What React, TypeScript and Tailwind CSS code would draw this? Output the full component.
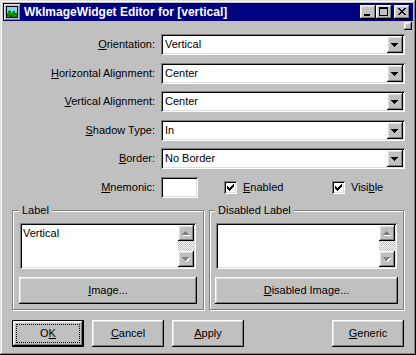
import React from "react";

const raised =
  "shadow-[inset_-1px_-1px_#000000,inset_1px_1px_#ffffff,inset_-2px_-2px_#808080,inset_2px_2px_#dfdfdf]";
const sunken =
  "shadow-[inset_1px_1px_#808080,inset_-1px_-1px_#ffffff,inset_2px_2px_#000000,inset_-2px_-2px_#dfdfdf]";

function Px({ cells, fill }: { cells: [number, number, number, number][]; fill: string }) {
  return (
    <>
      {cells.map(([x, y, w, h], i) => (
        <rect key={i} x={x} y={y} width={w} height={h} fill={fill} />
      ))}
    </>
  );
}

function AppIcon() {
  return (
    <svg width="16" height="16" viewBox="0 0 16 16" shapeRendering="crispEdges">
      <rect x="0" y="0" width="16" height="16" fill="#dfdfdf" />
      <rect x="1" y="1" width="15" height="15" fill="#808080" />
      <rect x="1" y="1" width="14" height="14" fill="#c0c0c0" />
      <rect x="2" y="2" width="12" height="12" fill="#000000" />
      <rect x="3" y="3" width="10" height="10" fill="#7fd4f0" />
      <Px
        fill="#008000"
        cells={[
          [3, 9, 10, 4],
          [4, 7, 3, 2],
          [8, 8, 3, 1],
          [5, 6, 1, 1],
          [9, 7, 2, 1],
        ]}
      />
      <Px
        fill="#00c000"
        cells={[
          [4, 8, 2, 1],
          [8, 9, 2, 1],
          [5, 10, 2, 1],
          [10, 11, 2, 1],
          [3, 12, 2, 1],
        ]}
      />
      <Px fill="#004000" cells={[[6, 11, 2, 2], [11, 9, 1, 2]]} />
    </svg>
  );
}

function CapButton({ kind, className = "" }: { kind: "min" | "max" | "close"; className?: string }) {
  return (
    <div className={`w-[16px] h-[14px] bg-[#c0c0c0] ${raised} ${className}`}>
      <svg width="16" height="14" viewBox="0 0 16 14" shapeRendering="crispEdges">
        {kind === "min" && <rect x="4" y="9" width="6" height="2" fill="#000" />}
        {kind === "max" && (
          <Px
            fill="#000"
            cells={[
              [3, 2, 9, 2],
              [3, 4, 1, 7],
              [11, 4, 1, 7],
              [3, 10, 9, 1],
            ]}
          />
        )}
        {kind === "close" && (
          <Px
            fill="#000"
            cells={[
              [4, 3, 2, 1],
              [10, 3, 2, 1],
              [5, 4, 2, 1],
              [9, 4, 2, 1],
              [6, 5, 4, 1],
              [7, 6, 2, 1],
              [6, 7, 4, 1],
              [5, 8, 2, 1],
              [9, 8, 2, 1],
              [4, 9, 2, 1],
              [10, 9, 2, 1],
            ]}
          />
        )}
      </svg>
    </div>
  );
}

function DropButton() {
  return (
    <div className={`w-[16px] h-[17px] bg-[#c0c0c0] shrink-0 ${raised}`}>
      <svg width="16" height="17" viewBox="0 0 16 17" shapeRendering="crispEdges">
        <Px
          fill="#000"
          cells={[
            [4, 7, 7, 1],
            [5, 8, 5, 1],
            [6, 9, 3, 1],
            [7, 10, 1, 1],
          ]}
        />
      </svg>
    </div>
  );
}

function ScrollArrow({ up }: { up: boolean }) {
  const tri: [number, number, number, number][] = up
    ? [
        [7, 6, 1, 1],
        [6, 7, 3, 1],
        [5, 8, 5, 1],
        [4, 9, 7, 1],
      ]
    : [
        [4, 6, 7, 1],
        [5, 7, 5, 1],
        [6, 8, 3, 1],
        [7, 9, 1, 1],
      ];
  const shadow = tri.map(([x, y, w, h]) => [x + 1, y + 1, w, h] as [number, number, number, number]);
  return (
    <div className={`w-[16px] h-[16px] bg-[#c0c0c0] shrink-0 ${raised}`}>
      <svg width="16" height="16" viewBox="0 0 16 16" shapeRendering="crispEdges">
        <Px fill="#ffffff" cells={shadow} />
        <Px fill="#808080" cells={tri} />
      </svg>
    </div>
  );
}

function Check() {
  return (
    <div className={`w-[13px] h-[13px] bg-white shrink-0 ${sunken}`}>
      <svg width="13" height="13" viewBox="0 0 13 13" shapeRendering="crispEdges">
        <g transform="translate(3 3)">
          <Px
            fill="#000"
            cells={[
              [6, 0, 1, 1],
              [5, 1, 2, 1],
              [0, 2, 1, 1],
              [4, 2, 3, 1],
              [0, 3, 2, 1],
              [3, 3, 3, 1],
              [0, 4, 5, 1],
              [1, 5, 3, 1],
              [2, 6, 1, 1],
            ]}
          />
        </g>
      </svg>
    </div>
  );
}

function Combo({ value }: { value: string }) {
  return (
    <div className={`h-[21px] bg-white p-[2px] flex items-stretch ${sunken}`}>
      <div className="flex-1 flex items-center pl-[2px] leading-[13px]">{value}</div>
      <DropButton />
    </div>
  );
}

function Label({ children }: { children: React.ReactNode }) {
  return <div className="h-[21px] flex items-center justify-end leading-[13px]">{children}</div>;
}

function TextBox({ text }: { text: string }) {
  return (
    <div className={`mx-[1px] h-[46px] bg-white p-[2px] flex ${sunken}`}>
      <div className="flex-1 pl-[1px] pt-[2px] leading-[13px]">{text}</div>
      <div className="w-[16px] flex flex-col">
        <ScrollArrow up />
        <div className="flex-1 bg-[conic-gradient(#ffffff_25%,#c0c0c0_0_50%,#ffffff_0_75%,#c0c0c0_0)] bg-[length:2px_2px]" />
        <ScrollArrow up={false} />
      </div>
    </div>
  );
}

function Btn({ children, className = "" }: { children: React.ReactNode; className?: string }) {
  return (
    <div className={`h-[27px] bg-[#c0c0c0] flex items-center justify-center leading-[13px] ${raised} ${className}`}>
      {children}
    </div>
  );
}

export default function App() {
  return (
    <div className="w-[416px] h-[355px] bg-[#c0c0c0] relative p-[3px] text-black text-[11px] font-['Liberation_Sans',Arial,sans-serif] shadow-[inset_-1px_-1px_#000000,inset_1px_1px_#dfdfdf,inset_-2px_-2px_#808080,inset_2px_2px_#ffffff]">
      <div className="h-[18px] bg-[#000080] flex items-center pl-[1px] pr-[3px]">
        <AppIcon />
        <span className="ml-[4px] text-white font-bold text-[12px] leading-[14px]">
          WkImageWidget Editor for [vertical]
        </span>
        <div className="ml-auto flex items-center">
          <CapButton kind="min" />
          <CapButton kind="max" />
          <CapButton kind="close" className="ml-[2px]" />
        </div>
      </div>

      <div className={`absolute top-[22px] right-[4px] w-[8px] h-[8px] bg-[#c0c0c0] ${raised}`} />

      <div className="pt-[13px] grid grid-cols-[152px_244px] gap-x-[6px] gap-y-[7.5px]">
        <Label>
          <span>
            <u>O</u>rientation:
          </span>
        </Label>
        <Combo value="Vertical" />
        <Label>
          <span>
            <u>H</u>orizontal Alignment:
          </span>
        </Label>
        <Combo value="Center" />
        <Label>
          <span>
            <u>V</u>ertical Alignment:
          </span>
        </Label>
        <Combo value="Center" />
        <Label>
          <span>
            <u>S</u>hadow Type:
          </span>
        </Label>
        <Combo value="In" />
        <Label>
          <span>
            <u>B</u>order:
          </span>
        </Label>
        <Combo value="No Border" />
        <Label>
          <span>
            <u>M</u>nemonic:
          </span>
        </Label>
        <div className="flex items-center h-[21px]">
          <div className={`w-[37px] h-[21px] bg-white ${sunken}`} />
          <div className="ml-[26px] w-[108px] flex items-center gap-[6px]">
            <Check />
            <span className="leading-[13px]">
              <u>E</u>nabled
            </span>
          </div>
          <div className="flex items-center gap-[6px]">
            <Check />
            <span className="leading-[13px]">
              Visi<u>b</u>le
            </span>
          </div>
        </div>
      </div>

      <div className="mt-[12px] flex pl-[9px] gap-[5px]">
        <div className="relative w-[192px] border border-[#808080] shadow-[inset_1px_1px_#ffffff,1px_1px_#ffffff] pt-[12px] px-[6px] pb-[5px]">
          <span className="absolute left-[6px] top-[-7px] px-[3px] bg-[#c0c0c0] leading-[13px]">Label</span>
          <TextBox text="Vertical" />
          <Btn className="mt-[8px]">
            <span>
              <u>I</u>mage...
            </span>
          </Btn>
        </div>
        <div className="relative w-[195px] border border-[#808080] shadow-[inset_1px_1px_#ffffff,1px_1px_#ffffff] pt-[12px] px-[5px] pb-[5px]">
          <span className="absolute left-[5px] top-[-7px] px-[3px] bg-[#c0c0c0] leading-[13px]">
            Disabled Label
          </span>
          <TextBox text="" />
          <Btn className="mt-[8px]">
            <span>
              <u>D</u>isabled Image...
            </span>
          </Btn>
        </div>
      </div>

      <div className="mt-[10px] flex pl-[9px] pr-[9px] gap-[8px]">
        <div className="w-[72px] h-[27px] border border-black">
          <div className={`relative h-full w-full bg-[#c0c0c0] flex items-center justify-center leading-[13px] ${raised}`}>
            <div className="absolute inset-[3px] border border-dotted border-black" />
            <span>
              O<u>K</u>
            </span>
          </div>
        </div>
        <Btn className="w-[72px]">
          <span>
            <u>C</u>ancel
          </span>
        </Btn>
        <Btn className="w-[72px]">
          <span>
            <u>A</u>pply
          </span>
        </Btn>
        <Btn className="w-[72px] ml-auto">
          <span>
            <u>G</u>eneric
          </span>
        </Btn>
      </div>
    </div>
  );
}
